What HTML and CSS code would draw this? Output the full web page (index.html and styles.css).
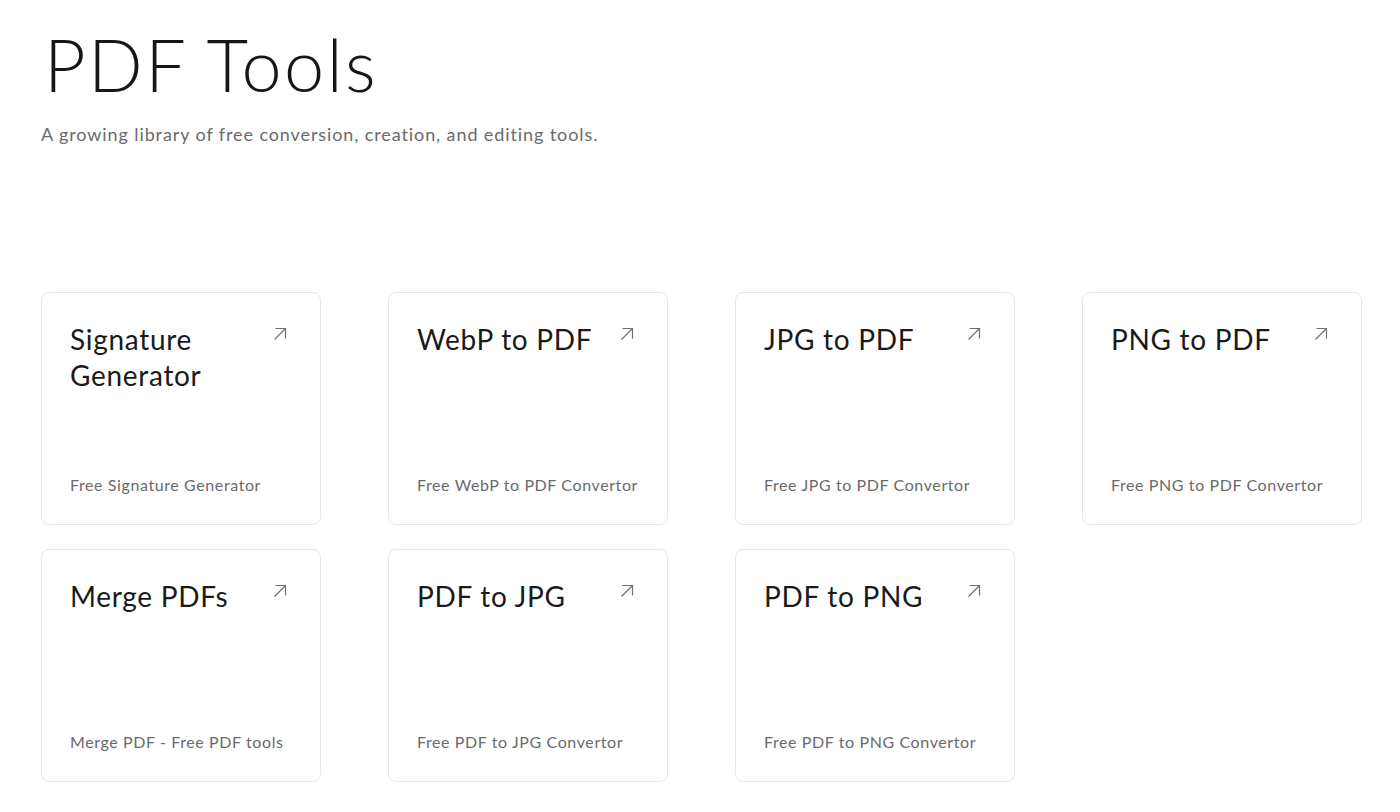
FILE: index.html
```html
<!DOCTYPE html>
<html lang="en">
<head>
<meta charset="utf-8">
<title>PDF Tools</title>
<link rel="stylesheet" href="styles.css">
</head>
<body>
<main class="page">
  <header class="intro">
    <h1 class="title">PDF Tools</h1>
    <p class="lead">A growing library of free conversion, creation, and editing tools.</p>
  </header>
  <section class="grid">
    <a class="card" href="#">
      <div class="card-head"><h2 class="card-title">Signature Generator</h2><svg class="arrow" viewBox="0 0 14 14"><path d="M1.5 12.5 L12.5 1.5 M2.5 1.5 H12.5 V11.5"/></svg></div>
      <p class="card-desc">Free Signature Generator</p>
    </a>
    <a class="card" href="#">
      <div class="card-head"><h2 class="card-title">WebP to PDF</h2><svg class="arrow" viewBox="0 0 14 14"><path d="M1.5 12.5 L12.5 1.5 M2.5 1.5 H12.5 V11.5"/></svg></div>
      <p class="card-desc">Free WebP to PDF Convertor</p>
    </a>
    <a class="card" href="#">
      <div class="card-head"><h2 class="card-title">JPG to PDF</h2><svg class="arrow" viewBox="0 0 14 14"><path d="M1.5 12.5 L12.5 1.5 M2.5 1.5 H12.5 V11.5"/></svg></div>
      <p class="card-desc">Free JPG to PDF Convertor</p>
    </a>
    <a class="card" href="#">
      <div class="card-head"><h2 class="card-title">PNG to PDF</h2><svg class="arrow" viewBox="0 0 14 14"><path d="M1.5 12.5 L12.5 1.5 M2.5 1.5 H12.5 V11.5"/></svg></div>
      <p class="card-desc">Free PNG to PDF Convertor</p>
    </a>
    <a class="card" href="#">
      <div class="card-head"><h2 class="card-title">Merge PDFs</h2><svg class="arrow" viewBox="0 0 14 14"><path d="M1.5 12.5 L12.5 1.5 M2.5 1.5 H12.5 V11.5"/></svg></div>
      <p class="card-desc">Merge PDF - Free PDF tools</p>
    </a>
    <a class="card" href="#">
      <div class="card-head"><h2 class="card-title">PDF to JPG</h2><svg class="arrow" viewBox="0 0 14 14"><path d="M1.5 12.5 L12.5 1.5 M2.5 1.5 H12.5 V11.5"/></svg></div>
      <p class="card-desc">Free PDF to JPG Convertor</p>
    </a>
    <a class="card" href="#">
      <div class="card-head"><h2 class="card-title">PDF to PNG</h2><svg class="arrow" viewBox="0 0 14 14"><path d="M1.5 12.5 L12.5 1.5 M2.5 1.5 H12.5 V11.5"/></svg></div>
      <p class="card-desc">Free PDF to PNG Convertor</p>
    </a>
  </section>
</main>
</body>
</html>
```
FILE: styles.css
```css
* { box-sizing: border-box; }
html, body { margin: 0; padding: 0; background: #ffffff; }
body {
  font-family: "Lato", "Open Sans", sans-serif;
  color: #1c1c1c;
}
.page {
  padding: 21px 38px 0 41px;
}
.title {
  margin: 0 0 0 3px;
  font-size: 72px;
  line-height: 86px;
  font-weight: 300;
  letter-spacing: 2.4px;
  color: #161616;
}
.lead {
  margin: 14px 0 0 0;
  font-size: 18px;
  line-height: 27px;
  letter-spacing: 0.9px;
  color: #6a6a6a;
}
.grid {
  margin-top: 144px;
  display: grid;
  grid-template-columns: repeat(4, 280px);
  column-gap: 67px;
  row-gap: 24px;
}
.card {
  display: flex;
  flex-direction: column;
  justify-content: space-between;
  height: 233px;
  padding: 28px 28px 27px 28px;
  border: 1px solid #e7e7e7;
  border-radius: 8px;
  text-decoration: none;
  color: inherit;
  background: #fff;
}
.card-head {
  display: flex;
  justify-content: space-between;
  align-items: flex-start;
  gap: 12px;
}
.card-title {
  margin: 0;
  font-size: 28px;
  line-height: 36px;
  font-weight: 400;
  letter-spacing: 0.7px;
  color: #1a1a1a;
}
.arrow {
  flex: none;
  width: 14px;
  height: 14px;
  margin: 6px 5px 0 0;
  fill: none;
  stroke: #707070;
  stroke-width: 1.2;
}
.card-desc {
  margin: 0;
  font-size: 16px;
  line-height: 24px;
  letter-spacing: 0.6px;
  color: #6a6a6a;
}
```
